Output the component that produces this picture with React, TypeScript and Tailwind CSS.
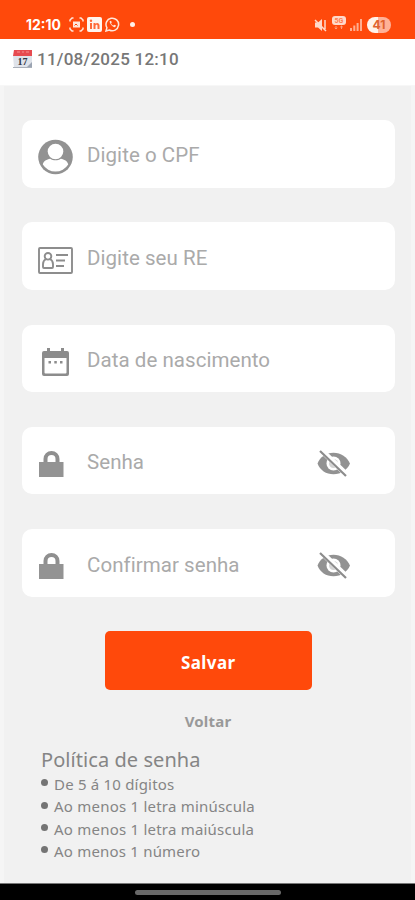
import type { ReactNode } from "react";

interface FieldProps {
  icon: ReactNode;
  label: string;
  secret?: boolean;
}

const rules = [
  { text: "De 5 á 10 dígitos", spacing: "tracking-[0.2px]" },
  { text: "Ao menos 1 letra minúscula", spacing: "tracking-[0.22px]" },
  { text: "Ao menos 1 letra maiúscula", spacing: "tracking-[0.22px]" },
  { text: "Ao menos 1 número", spacing: "tracking-[0.2px]" },
];

export default function App() {
  return (
    <div className="flex h-[900px] w-[415px] flex-col overflow-hidden bg-[#f1f1f1] font-['Noto_Sans',sans-serif]">
      <StatusBar />

      <header className="flex h-[47px] shrink-0 items-start border-b border-[#f7f7f7] bg-white pt-[10px] pl-[13px]">
        <CalendarEmoji />
        <span className="ml-[4px] font-['Roboto',sans-serif] text-[17px] leading-5 font-medium tracking-[0.25px] whitespace-nowrap text-[#777]">
          11/08/2025 12:10
        </span>
      </header>

      <main className="flex grow flex-col border-x-4 border-[#f5f5f5] pt-[34px]">
        <form className="flex flex-col gap-[34.8px] pr-4 pl-[18px]">
          <Field icon={<UserIcon />} label="Digite o CPF" />
          <Field icon={<CardIcon />} label="Digite seu RE" />
          <Field icon={<DateIcon />} label="Data de nascimento" />
          <Field icon={<LockIcon />} label="Senha" secret />
          <Field icon={<LockIcon />} label="Confirmar senha" secret />
        </form>

        <button className="mt-[34px] ml-[100.5px] h-[59.5px] w-[207.5px] rounded-[5px] bg-[#ff490b] pt-1 text-[17px] font-bold tracking-[0.4px] text-white">
          Salvar
        </button>
        <button className="mt-[20px] h-[22px] w-full pl-px text-[15px] leading-[22px] font-bold tracking-[0.2px] text-[#999]">
          Voltar
        </button>

        <section className="mt-[15px] pl-[37px] text-[#858585]">
          <h2 className="text-[20px] leading-[26px] tracking-[0.06px] whitespace-nowrap">
            Política de senha
          </h2>
          <ul>
            {rules.map((rule) => (
              <li key={rule.text} className="flex h-[22.3px] items-center">
                <span className="mb-[3px] size-[7px] rounded-full bg-[#747474]" />
                <span className={`ml-[6px] text-[15px] whitespace-nowrap ${rule.spacing}`}>
                  {rule.text}
                </span>
              </li>
            ))}
          </ul>
        </section>
      </main>

      <footer className="flex h-[17px] shrink-0 justify-center border-t border-[#777] bg-black pt-[6px]">
        <div className="h-[5px] w-[146px] rounded-full bg-[#686868]" />
      </footer>
    </div>
  );
}

function Field({ icon, label, secret }: FieldProps) {
  return (
    <div className="flex h-[67.5px] items-center rounded-[10px] bg-white pl-4">
      <div className="flex w-[49px] items-center pt-[6px]">{icon}</div>
      <span className="w-[230px] pt-[4px] font-['Roboto',sans-serif] text-[20.5px] tracking-[0.05px] whitespace-nowrap text-[#aaa]">
        {label}
      </span>
      {secret && <EyeOffIcon />}
    </div>
  );
}

function StatusBar() {
  return (
    <div className="flex h-[39px] shrink-0 items-center justify-between bg-[#ff490b] pt-[10px] pr-[24px] pl-[26px] text-white">
      <div className="flex items-center">
        <span className="w-[43px] font-['Inter',sans-serif] text-[14px] font-bold">
          12:10
        </span>
        <svg width="15" height="15" viewBox="0 0 15 15" fill="none" stroke="#ffe6da" strokeWidth="1.5">
          <path d="M1 4.5V3l2-2h1.500M10.500 1H12l2 2v1.500M14 10.500V12l-2 2h-1.500M4.500 14H3l-2-2v-1.500" />
          <path d="M4 4.500h7v6H4z" fill="#ffe6da" stroke="none" />
          <path d="m5.500 8.500 1.500-1.500 1.500 1.500" stroke="#ff490b" strokeWidth="1" />
        </svg>
        <svg className="ml-[3px]" width="15" height="15" viewBox="0 0 15 15" fill="#ff6a38">
          <rect width="15" height="15" rx="2" fill="#fff5ef" />
          <rect x="3" y="6" width="2" height="6" />
          <circle cx="4" cy="3.800" r="1.200" />
          <path d="M6.500 6h2v.9c1.200-1.700 4-1.100 4 1.600V12h-2V8.800c0-1.600-2-1.500-2 0V12h-2z" />
        </svg>
        <svg className="ml-[3px]" width="15" height="15" viewBox="0 0 15 15" fill="none" stroke="#ffe6da" strokeWidth="1.500">
          <path d="m1 14 .9-3.300A6.300 6.300 0 1 1 4.300 13z" />
          <path d="M4.700 4.300c-.6 1.700 3.200 6.300 5.500 5.800l.9-1.500-1.900-.9-.9.900C7.100 8.100 6.400 7.100 6.100 6.200l.7-.9-.8-1.600z" fill="#ffe6da" stroke="none" />
        </svg>
        <span className="ml-[10px] size-[5px] rounded-full bg-[#fff0e8]" />
      </div>

      <div className="flex items-center">
        <svg width="14" height="14" viewBox="0 0 14 14" fill="#ffd9ca">
          <path d="M1 4.500h3L8 1v12L4 9.500H1z" />
          <path d="m1 2 11 11M11 2v9" stroke="#ffd9ca" strokeWidth="1.500" />
        </svg>
        <svg className="mb-[3px] ml-[4px]" width="14" height="14" viewBox="0 0 14 14">
          <path d="M3 0h8a3 3 0 0 1 3 3v3a3 3 0 0 1-3 3H3a3 3 0 0 1-3-3V3a3 3 0 0 1 3-3z" fill="#ffd9ca" />
          <text x="7" y="7" textAnchor="middle" fontFamily="Roboto, sans-serif" fontSize="7" fontWeight="700" fill="#ff7b50">
            5G
          </text>
          <path d="m4 10 0 3M2.700 11.800 4 13l1.300-1.200M9.500 13v-3M8.200 11.200 9.500 10l1.300 1.200" stroke="#ff9d7c" fill="none" />
        </svg>
        <svg className="ml-[4px]" width="12" height="12" viewBox="0 0 12 12" fill="#ffad8f">
          <path d="M0 9h2v3H0zM3.300 6.500h2V12h-2zM6.600 4h2v8h-2zM10 0h2v12h-2z" />
        </svg>
        <span className="ml-[5px] flex h-4 w-6 items-center justify-center rounded-full bg-linear-to-r from-[#fff2eb] from-45% to-[#ffb197] to-45% font-['Inter',sans-serif] text-[12px] leading-4 font-bold text-[#e0622f]">
          41
        </span>
      </div>
    </div>
  );
}

function CalendarEmoji() {
  return (
    <svg width="20" height="20" viewBox="0 0 20 20">
      <path d="M0 6h19v13H1z" fill="#dfe3ea" />
      <path d="M1 1h18v6H0z" fill="#e64b50" />
      <path d="M4 3h3m2 0h2m2 0h3" stroke="#f49292" />
      <path d="M13 19h6v-6z" fill="#9ba4b2" />
      <text x="9.500" y="16" textAnchor="middle" fontFamily="Liberation Serif, serif" fontSize="10" fontWeight="700" fill="#303744">
        17
      </text>
      <path d="M0 18.500h19" stroke="#aab0ba" />
    </svg>
  );
}

function UserIcon() {
  return (
    <svg width="35" height="36" viewBox="0 0 35 36">
      <circle cx="17.500" cy="18" r="17.300" fill="#929292" />
      <path d="M4.800 25.500c.6-3.500 4-5.300 7.400-5.800 3.100 2.200 7.500 2.200 10.600 0 3.400.5 6.800 2.300 7.400 5.800a15 15 0 0 1-25.400 0z" fill="#fff" />
      <circle cx="17.500" cy="12.500" r="7.800" fill="#fff" />
    </svg>
  );
}

function CardIcon() {
  return (
    <svg className="mt-[2px]" width="35" height="27" viewBox="0 0 35 27" fill="none" stroke="#8d8d8d" strokeWidth="1.900">
      <rect x="1" y="1" width="33" height="25" rx="1" />
      <circle cx="10" cy="9.300" r="3.300" />
      <path d="M8 12c-2 1-3 2.800-3 5.200V20q0 1 1 1h8q1 0 1-1v-2.800c0-2.400-1-4.200-3-5.200M18 8h12M18 13.500h9M18 19h8" />
    </svg>
  );
}

function DateIcon() {
  return (
    <svg className="mt-px ml-1" width="27" height="30" viewBox="0 0 27 30">
      <path
        d="M5 1h3v3h11V1h3v3h3a2 2 0 0 1 2 2v21a2 2 0 0 1-2 2H2a2 2 0 0 1-2-2V6a2 2 0 0 1 2-2h3zM2.500 11v14.500q0 1 1 1h20q1 0 1-1V11z"
        fill="#8c8c8c"
        fillRule="evenodd"
      />
      <path d="M6.500 14h2.500v2.500h-2.500zM12.300 14h2.500v2.500h-2.500zM18 14h2.500v2.500h-2.500z" fill="#8c8c8c" />
    </svg>
  );
}

function LockIcon() {
  return (
    <svg className="ml-px" width="25" height="28" viewBox="0 0 25 28">
      <path d="M6.500 13V9a6 6 0 0 1 12 0v4" fill="none" stroke="#8f8f8f" strokeWidth="4" />
      <path d="M0 12h24.500v15H0z" fill="#939393" />
    </svg>
  );
}

function EyeOffIcon() {
  return (
    <svg className="mt-[6px]" width="34" height="28" viewBox="0 0 34 28">
      <path d="M0.500 13.500C3 7 9 2.800 16.500 2.800S30 7 33 13.500C30 20.200 24 24.300 16.500 24.300S3 20.200.5 13.500z" fill="#929292" />
      <circle cx="16.500" cy="13.500" r="7" fill="#fff" />
      <circle cx="16.500" cy="13.500" r="4.500" fill="#d4d4d4" />
      <path d="m4 0 26 25" stroke="#fff" strokeWidth="5.500" />
      <path d="m3 1 26 25" stroke="#8c8c8c" strokeWidth="2.200" />
    </svg>
  );
}
